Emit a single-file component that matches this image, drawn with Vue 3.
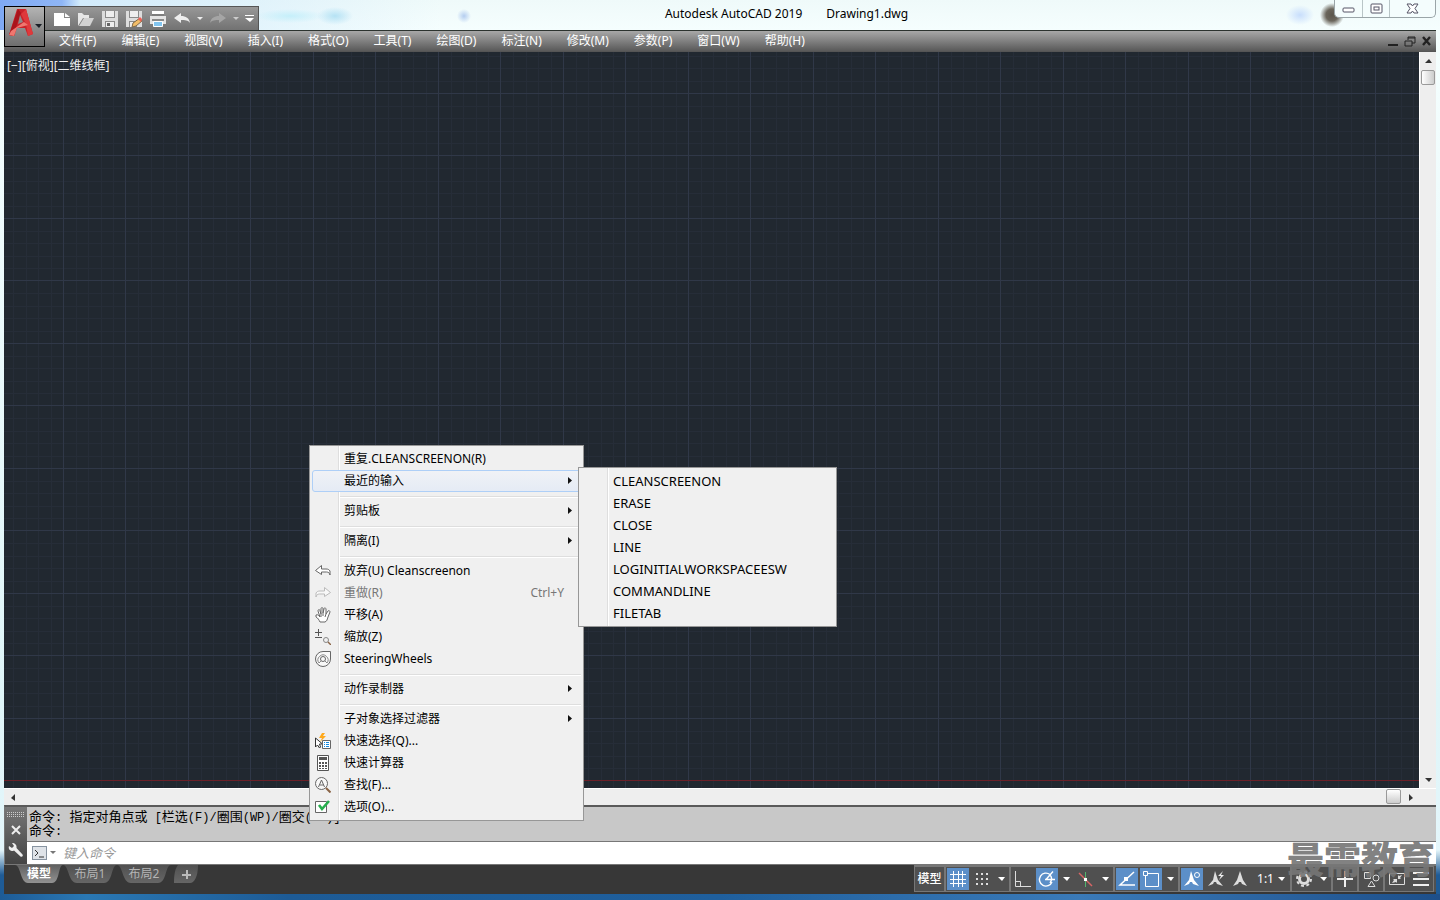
<script setup>
const menus = ['文件(F)', '编辑(E)', '视图(V)', '插入(I)', '格式(O)', '工具(T)', '绘图(D)', '标注(N)', '修改(M)', '参数(P)', '窗口(W)', '帮助(H)']

const context = [
  { label: '重复.CLEANSCREENON(R)' },
  { label: '最近的输入', sub: true, active: true, end: true },
  { label: '剪贴板', sub: true, end: true },
  { label: '隔离(I)', sub: true, end: true },
  { label: '放弃(U) Cleanscreenon', icon: 'undo' },
  { label: '重做(R)', icon: 'redo', disabled: true, key: 'Ctrl+Y' },
  { label: '平移(A)', icon: 'pan' },
  { label: '缩放(Z)', icon: 'zoom' },
  { label: 'SteeringWheels', icon: 'wheel', end: true },
  { label: '动作录制器', sub: true, end: true },
  { label: '子对象选择过滤器', sub: true },
  { label: '快速选择(Q)...', icon: 'quick' },
  { label: '快速计算器', icon: 'calc' },
  { label: '查找(F)...', icon: 'find' },
  { label: '选项(O)...', icon: 'options' }
]
const recent = ['CLEANSCREENON', 'ERASE', 'CLOSE', 'LINE', 'LOGINITIALWORKSPACEESW', 'COMMANDLINE', 'FILETAB']

const history = ['命令: 指定对角点或 [栏选(F)/圈围(WP)/圈交(CP)]', '命令:']
const runs = (line) => line.split(/([\u4e00-\u9fff]+)/).filter(Boolean).map((text) => ({ text, han: /[\u4e00-\u9fff]/.test(text) }))
const minor = [0, 13, 25, 38, 50, 75, 88, 100, 113]
</script>

<template>
  <div class="window">
    <header class="titlebar">
      <div class="quick">
        <button class="q" aria-label="新建"><svg width="18" height="18"><path d="M1 3h10v5h6v8H1z" fill="#fff" /><path d="M12 3l5 4h-5z" fill="#fff" /></svg></button>
        <button class="q" aria-label="打开"><svg width="18" height="18"><path d="M1 16V3h4l2 2h5v3H6z" fill="#e6e6e6" /><path d="M7 8h10l-4 8H2z" fill="#d2d2d2" /></svg></button>
        <button class="q" aria-label="保存"><svg width="18" height="18"><path d="M1 1h16v16H1z" fill="#ddd" /><path d="M4 1h10v7H4zM4 11h10v6H4z" fill="#8a8a8a" /><path d="M5 1h8v6H5zM5 12h8v5H5z" fill="#eee" /><path d="M6 13h3v3H6z" fill="#666" /></svg></button>
        <button class="q" aria-label="另存为"><svg width="18" height="18"><path d="M1 1h16v16H1z" fill="#ddd" /><path d="M4 1h10v7H4zM4 11h8v6H4z" fill="#8a8a8a" /><path d="M5 1h8v6H5zM5 12h4v5H5z" fill="#eee" /><path d="M7 17l1-4 7-5 2 3-6 5z" fill="#f2bd68" stroke="#806a48" /><path d="M13 9l2-2 2 2-1 3z" fill="#ee6058" /></svg></button>
        <button class="q" aria-label="打印"><svg width="18" height="18"><path d="M1 6h16v8H1z" fill="#e4e4e4" /><path d="M3 1h12v3H3z" fill="#fff" /><path d="M3 4h12v2H3z" fill="#7d7d7d" /><path d="M3 9h12v2H3z" fill="#8a8a8a" /><path d="M4.500 11.500h9v5h-9z" fill="#82c5f0" stroke="#fff" /></svg></button>
        <button class="q" aria-label="放弃"><svg width="18" height="18"><path d="M1 8l7-5v3c5 0 8 2 9 7-2-3-5-3-9-3v3z" fill="#eee" /></svg></button>
        <button class="q tiny" aria-label="放弃列表"><svg width="6" height="4"><path d="M0 0h6L3 3z" fill="#eee" /></svg></button>
        <button class="q" aria-label="重做"><svg width="18" height="18"><path d="M17 8l-7-5v3c-5 0-8 2-9 7 2-3 5-3 9-3v3z" fill="#a5a5a5" /></svg></button>
        <button class="q tiny" aria-label="重做列表"><svg width="6" height="4"><path d="M0 0h6L3 3z" fill="#ccc" /></svg></button>
        <button class="q more" aria-label="自定义"><svg width="9" height="8"><path d="M0 0h9v1H0zM0 3h9L5 7z" fill="#fff" /></svg></button>
      </div>
      <div class="title"><span>Autodesk AutoCAD 2019</span><span>Drawing1.dwg</span></div>
      <div class="winbtns">
        <button aria-label="最小化"><svg width="13" height="11"><rect x="1" y="5" width="11" height="4" rx="1" fill="#fff" stroke="#555566" /></svg></button>
        <button aria-label="还原"><svg width="13" height="11"><rect x="1" y="1" width="11" height="9" rx="1" fill="#fff" stroke="#555566" /><rect x="4" y="4" width="5" height="3" fill="#fff" stroke="#555566" /></svg></button>
        <button aria-label="关闭"><svg width="13" height="11"><path d="M1 1h4l1.500 2L8 1h4L9 5.500l3 4.500H8L6.500 8 5 10H1l3-4.500z" fill="#fff" stroke="#555566" /></svg></button>
      </div>
    </header>

    <button class="appbtn" aria-label="应用程序菜单">
      <svg width="39" height="39" viewBox="0 0 39 39">
        <path d="M4 28L12 2h9l7 25-5 2-3-8h-8l-3 8z" fill="#c92229" />
        <path d="M4 28L13 2l3 4-4 11-3 12z" fill="#a9141b" />
        <path d="M13 2h8l-5 5 5 10 2 12 5-2L21 2z" fill="#df393b" />
        <path d="M6 24l13-9 4 3-11 3-3 8-5-1z" fill="#ef776f" />
        <path d="M15 8l3 7-5 2z" fill="#8a8a8a" />
        <path d="M30 17h7l-3 4z" fill="#1b1f27" />
      </svg>
    </button>

    <nav class="menubar">
      <button v-for="m in menus" :key="m">{{ m }}</button>
      <div class="docbtns">
        <button aria-label="最小化文档"><svg width="10" height="11"><path d="M0 8h10v2H0z" fill="#222" /></svg></button>
        <button aria-label="还原文档"><svg width="12" height="11"><path d="M4 4V1h7v6H8M1 5h7v5H1zM4 2h7" fill="none" stroke="#222" /></svg></button>
        <button aria-label="关闭文档"><svg width="10" height="11"><path d="M1 1l7 8M8 1L1 9" stroke="#222" stroke-width="2.4" /></svg></button>
      </div>
    </nav>

    <main class="drawing">
      <div class="canvas">
        <svg class="grid" width="100%" height="100%" aria-hidden="true">
          <defs>
            <pattern id="grid" x="59" y="41" width="125" height="125" patternUnits="userSpaceOnUse">
              <rect width="125" height="125" fill="#212830" />
              <template v-for="n in minor" :key="n">
                <rect :x="n" y="0" width="1" height="125" fill="#262d38" />
                <rect x="0" :y="n" width="125" height="1" fill="#262d38" />
              </template>
              <path d="M0 0h1v125H0zM62 0h1v125h-1zM0 0h125v1H0zM0 62h125v1H0z" fill="#303848" />
            </pattern>
          </defs>
          <rect width="100%" height="100%" fill="url(#grid)" />
        </svg>
        <div class="axis"></div>
        <div class="viewlabel">[−][俯视][二维线框]</div>
      </div>
      <div class="vscroll">
        <button aria-label="向上滚动"><svg width="7" height="4"><path d="M0 4h7L4 0z" fill="#333" /></svg></button>
        <div class="thumb"></div>
        <button class="last" aria-label="向下滚动"><svg width="7" height="4"><path d="M0 0h7L4 4z" fill="#333" /></svg></button>
      </div>
    </main>
    <div class="hscroll">
      <button aria-label="向左滚动"><svg width="4" height="7"><path d="M4 0v7L0 4z" fill="#333" /></svg></button>
      <div class="thumb"></div>
      <button aria-label="向右滚动"><svg width="4" height="7"><path d="M0 0v7l4-3z" fill="#333" /></svg></button>
    </div>

    <section class="command">
      <div class="side">
        <svg width="18" height="6"><template v-for="r in 3" :key="r"><rect v-for="c in 9" :key="c" :x="c * 2 - 2" :y="r * 2 - 2" width="1" height="1" fill="#ccc" /></template></svg>
        <button aria-label="关闭命令窗口"><svg width="10" height="10"><path d="M1 1l8 8M9 1L1 9" stroke="#eee" stroke-width="2" /></svg></button>
        <button aria-label="自定义命令窗口"><svg width="16" height="16"><path d="M4 1l2 3-2 2-3-2c-1 3 1 5 4 5l1-.5 6.500 6c1.500 1 3-.5 2-2L8.500 6C9 3 7 1 4 1z" fill="#eee" /></svg></button>
      </div>
      <div class="cmdbody">
        <div class="history">
          <p v-for="(line, i) in history" :key="i"><span v-for="(r, j) in runs(line)" :key="j" :class="{ han: r.han }">{{ r.text }}</span></p>
        </div>
        <label class="entry">
          <svg width="15" height="14"><rect x="0.5" y="0.5" width="14" height="13" fill="#dfe3e8" stroke="#8793a0" /><path d="M3 4l3 3-3 3M7 11h5" fill="none" stroke="#333" /></svg>
          <svg width="6" height="4"><path d="M0 0h6L3 3z" fill="#777" /></svg>
          <input type="text" placeholder="键入命令" aria-label="命令" />
        </label>
      </div>
    </section>

    <footer class="status">
      <div class="tabs">
        <button class="tab on">模型</button>
        <button class="tab">布局1</button>
        <button class="tab">布局2</button>
        <button class="tab add" aria-label="新建布局"><svg width="9" height="9"><path d="M4 0h2v9H4zM0 4h9v2H0z" fill="#bbb" /></svg></button>
      </div>
      <div class="tools">
        <div class="group"><button class="text model">模型</button></div>
        <div class="group">
          <button class="t on" aria-label="栅格"><svg width="22" height="22"><path d="M6.500 3v16M11.500 3v16M15.500 3v16M3 6.500h16M3 11.500h16M3 15.500h16" stroke="#fff" /></svg></button>
          <button class="t" aria-label="捕捉"><svg width="22" height="22"><path d="M5 5h2v2H5zM10 5h2v2h-2zM15 5h2v2h-2zM5 10h2v2H5zM10 10h2v2h-2zM15 10h2v2h-2zM5 15h2v2H5zM10 15h2v2h-2zM15 15h2v2h-2z" fill="#ddd" /></svg></button>
          <button class="d" aria-label="捕捉设置"><svg width="7" height="4"><path d="M0 0h7L4 4z" fill="#fff" /></svg></button>
        </div>
        <div class="group">
          <button class="t" aria-label="正交"><svg width="22" height="22"><path d="M3.500 3v15.500H19M3.500 13.500h5v5" fill="none" stroke="#ddd" /></svg></button>
          <button class="t on" aria-label="极轴"><svg width="22" height="22"><path d="M14 6.500A6.500 6.500 0 1 0 16 14" fill="none" stroke="#fff" stroke-width="1.400" /><path d="M10 11.500l7-8M9 11.500h10M14 7c2 2 2 5 0 8" fill="none" stroke="#fff" stroke-width="1.400" /></svg></button>
          <button class="d" aria-label="极轴设置"><svg width="7" height="4"><path d="M0 0h7L4 4z" fill="#fff" /></svg></button>
          <button class="t" aria-label="等轴测"><svg width="22" height="22"><path d="M4 5l13 13" stroke="#d96565" stroke-width="1.400" /><path d="M10.500 4v15" stroke="#53b46d" /><path d="M9 10h3v3H9z" fill="#fff" /></svg></button>
          <button class="d" aria-label="等轴测设置"><svg width="7" height="4"><path d="M0 0h7L4 4z" fill="#fff" /></svg></button>
        </div>
        <div class="group">
          <button class="t on" aria-label="对象捕捉追踪"><svg width="22" height="22"><path d="M18 4L4 17h15" fill="none" stroke="#fff" stroke-width="1.500" /><path d="M8 9h4v4H8z" fill="#fff" /></svg></button>
          <button class="t on" aria-label="对象捕捉"><svg width="22" height="22"><path d="M8 5.500h10.500v13h-13V8" fill="none" stroke="#fff" /><path d="M3.500 3.500h4v4h-4z" fill="none" stroke="#fff" /></svg></button>
          <button class="d" aria-label="对象捕捉设置"><svg width="7" height="4"><path d="M0 0h7L4 4z" fill="#fff" /></svg></button>
        </div>
        <div class="group">
          <button class="t on" aria-label="注释可见性"><svg width="22" height="22"><path d="M10 3l3 9 5 6-6-2-1-2h-2l-1 2-5 2 5-6z" fill="#fff" /><circle cx="16" cy="7" r="2.500" fill="none" stroke="#fff" /></svg></button>
          <button class="t" aria-label="自动缩放"><svg width="22" height="22"><path d="M10 3l3 9 5 6-6-2-1-2h-2l-1 2-5 2 5-6z" fill="#ddd" /><path d="M18 3l-5 5h3l-2 4 5-5h-3z" fill="#eee" /></svg></button>
          <button class="t" aria-label="注释"><svg width="22" height="22"><path d="M11 3l3 9 4 6-5-2-1-2h-2l-1 2-5 2 4-6z" fill="#ddd" /></svg></button>
          <button class="text scale">1:1 <svg width="7" height="4"><path d="M0 0h7L4 4z" fill="#fff" /></svg></button>
        </div>
        <div class="group">
          <button class="t" aria-label="工作空间"><svg width="22" height="22"><circle cx="11" cy="11" r="4.500" fill="none" stroke="#ddd" stroke-width="3" /><circle cx="11" cy="11" r="7" fill="none" stroke="#ddd" stroke-width="2" stroke-dasharray="3 2.500" /></svg></button>
          <button class="d" aria-label="工作空间设置"><svg width="7" height="4"><path d="M0 0h7L4 4z" fill="#fff" /></svg></button>
        </div>
        <div class="group"><button class="t" aria-label="注释监视器"><svg width="22" height="22"><path d="M11 3v16M3 11h16" stroke="#eee" stroke-width="2" /></svg></button></div>
        <div class="group"><button class="t" aria-label="隔离对象"><svg width="22" height="22"><path d="M4.500 4.500h6v6h-6zM8 18.500h7L11.500 13z" fill="none" stroke="#ddd" /><circle cx="16" cy="10" r="3" fill="none" stroke="#ddd" /></svg></button></div>
        <div class="group">
          <button class="t" aria-label="全屏显示"><svg width="22" height="22"><path d="M3.500 5.500h15v11h-15z" fill="none" stroke="#ddd" /><path d="M12 11V7l1 1 3-1-2 3 1 1zM6 15l2-3-1-1h4v4l-1-1z" fill="#ddd" /></svg></button>
          <button class="t" aria-label="自定义状态栏"><svg width="22" height="22"><path d="M3 5h16M3 11h16M3 17h16" stroke="#eee" stroke-width="2" /></svg></button>
        </div>
      </div>
    </footer>

    <div class="watermark">最需教育</div>

    <ul class="popup main">
      <li v-for="c in context" :key="c.label" :class="{ end: c.end }">
        <button :class="{ active: c.active }" :disabled="c.disabled">
          <span class="ico">
            <svg v-if="c.icon === 'undo'" width="16" height="16"><path d="M6.500 2.500L.5 7.500l6 4V9h5c2 0 3 1 3.500 3V8c-1-1.500-2-2-4-2H6.500z" fill="#fff" stroke="#666" /></svg>
            <svg v-else-if="c.icon === 'redo'" width="16" height="16"><path d="M9.500 2.500l6 5-6 4V9h-5c-2 0-3 1-3.500 3V8c1-1.500 2-2 4-2h4.500z" fill="#f8f8f8" stroke="#bbb" /></svg>
            <svg v-else-if="c.icon === 'pan'" width="16" height="16"><path d="M5 15c-1-2-2-4-4-5V8c2-1 3 1 4 2L3 4c0-2 2-2 2 0l1 3V2c0-2 2-2 2 0v4l1-4c0-2 2-1 2 0v5l2-3c1-1 2 0 2 1l-2 5c-1 3-1 4-3 5zM6 7v3M8 6v3M11 7l-1 3" fill="#fff" stroke="#666" /></svg>
            <svg v-else-if="c.icon === 'zoom'" width="16" height="16"><path d="M3.500 0v7M0 3.500h7M0 8.500h7" stroke="#555" /><circle cx="11" cy="11" r="2.500" fill="none" stroke="#888" /><path d="M13 13l3 3" stroke="#8a6446" stroke-width="1.400" /></svg>
            <svg v-else-if="c.icon === 'wheel'" width="16" height="16"><path d="M8 .5h7.500V8A7.500 7.500 0 1 1 8 .5z" fill="#f8f8f8" stroke="#666" /><path d="M4 12a5 5 0 1 1 8 0M4 12l2-2M12 12l-2-2" fill="none" stroke="#888" /><circle cx="8" cy="8" r="2.500" fill="none" stroke="#666" /></svg>
            <svg v-else-if="c.icon === 'quick'" width="16" height="16"><path d="M7 0L4 5h3L5 9l6-6H8l2-3z" fill="#ffa91b" /><path d="M.5 5v9l2-2 2 3 1-1-1-3h3z" fill="#fff" stroke="#333" /><path d="M7.500 7.500h8v8h-8z" fill="#fff" stroke="#666" /><path d="M9 9.500h1M11 9.500h3M9 11.500h1M11 11.500h3M9 13.500h1M11 13.500h3" stroke="#1389df" /></svg>
            <svg v-else-if="c.icon === 'calc'" width="16" height="16"><path d="M2.500.5h11v15h-11z" fill="#fff" stroke="#555" /><path d="M4 2h8v3H4zM4 7h2v2H4zM7 7h2v2H7zM10 7h2v2h-2zM4 10h2v2H4zM7 10h2v2H7zM10 10h2v2h-2zM4 13h2v1H4zM7 13h2v1H7zM10 13h2v1h-2z" fill="#555" /></svg>
            <svg v-else-if="c.icon === 'find'" width="16" height="16"><circle cx="6.500" cy="6.500" r="6" fill="#f8f8f8" stroke="#666" /><path d="M3.500 10l3-7 3 7M5 8h3.500" fill="none" stroke="#666" /><path d="M11 11l4.500 4.500" stroke="#8a6446" stroke-width="2" /></svg>
            <svg v-else-if="c.icon === 'options'" width="16" height="16"><path d="M.5 2.500h11v11H.5z" fill="#fff" stroke="#666" /><path d="M4 6l3 4 7-8" fill="none" stroke="#25ae4c" stroke-width="2.600" /></svg>
          </span>
          <span class="lbl">{{ c.label }}</span>
          <span v-if="c.key" class="key">{{ c.key }}</span>
          <svg v-if="c.sub" class="arrow" width="5" height="8"><path d="M0 0v7l4-3.500z" fill="#111" /></svg>
        </button>
      </li>
    </ul>
    <ul class="popup child">
      <li v-for="r in recent" :key="r"><button><span class="ico"></span><span class="lbl">{{ r }}</span></button></li>
    </ul>
  </div>
</template>

<style>
body { margin: 0; }
</style>

<style scoped>
* { box-sizing: border-box; }
button { border: 0; margin: 0; padding: 0; background: none; color: inherit; font: inherit; display: flex; align-items: center; justify-content: center; flex: none; }
svg { display: block; flex: none; }
.window {
  position: relative; display: flex; flex-direction: column; min-height: 100vh; padding: 0 4px 6px; overflow: hidden;
  font: 12px/16px "Noto Sans", "Noto Sans CJK SC", sans-serif; color: #000;
  background:
    radial-gradient(circle at 464px 16px, #b4cdf0 0, #b4cdf000 7px),
    radial-gradient(ellipse 18px 9px at 335px 16px, #b5e2f4, #b5e2f400),
    radial-gradient(ellipse 34px 7px at 290px 16px, #c5effa, #c5effa00),
    radial-gradient(ellipse 14px 10px at calc(100% - 140px) 15px, #c8defc, #c8defc00),
    radial-gradient(circle at calc(100% - 108px) 15px, #5b564c 0, #6b665c 6px, #d0d8d800 12px),
    linear-gradient(90deg, #7fa9f4 0, #8fb6f6 62px, #d2ebfb 80px, #d9f3fc00 440px) 0 0 / 100% 30px no-repeat,
    linear-gradient(90deg, #1d5b96, #2a78b4 6%, #1d5b96 20%, #1f5f9d 50%, #3a7ab8 75%, #1d4f8a) 0 100% / 100% 6px no-repeat,
    linear-gradient(#effafa 0, #f5fefe 30px, #dff5f8 700px, #e4f6fb 850px, #1f5b96 875px, #1d5b96);
}
.titlebar { display: flex; height: 30px; align-items: flex-start; }
.quick { display: flex; align-items: center; width: 255px; height: 24px; margin-top: 6px; padding-left: 45px; border: 1px solid #555; border-bottom: 0; background: linear-gradient(#989898, #727272); }
.q { width: 24px; height: 22px; }
.q.tiny { width: 12px; }
.q.more { width: 15px; }
.title { flex: 1; display: flex; justify-content: center; gap: 24px; padding: 6px 20px 0 0; }
.winbtns { display: flex; width: 102px; height: 18px; border: 1px solid #9aa5a8; border-top: 0; border-radius: 0 0 5px 5px; background: #f4fdfd; }
.winbtns button { width: 27px; }
.winbtns button + button { border-left: 1px solid #b9c5c7; }
.winbtns button:last-child { flex: 1; }
.appbtn { position: absolute; left: 4px; top: 6px; width: 41px; height: 41px; border: 1px solid #000; background: linear-gradient(#b4b4b4, #6e6e6e); z-index: 1; }
.menubar { display: flex; align-items: center; gap: 25px; height: 22px; padding: 0 4px 0 55px; border-top: 1px solid #2c332f; border-bottom: 1px solid #555; background: linear-gradient(#a8a8a8, #595959); color: #fff; }
.docbtns { display: flex; gap: 6px; margin-left: auto; }
.drawing { flex: 1; display: flex; min-height: 0; }
.canvas { position: relative; flex: 1; background: #212830; }
.grid { position: absolute; inset: 0; }
.axis { position: absolute; left: 0; right: 0; bottom: 7px; height: 1px; background: #6b2028; }
.viewlabel { position: relative; padding: 6px 3px; color: #eee; }
.vscroll { display: flex; flex-direction: column; width: 17px; background: #eee; border-left: 1px solid #fff; }
.vscroll button { height: 17px; }
.vscroll .last { margin-top: auto; }
.thumb { border: 1px solid #999; border-radius: 2px; background: linear-gradient(90deg, #fff, #ccc); }
.vscroll .thumb { height: 15px; margin: 1px; }
.hscroll { display: flex; height: 17px; padding-right: 17px; background: #eee; border-top: 1px solid #fff; }
.hscroll button { width: 17px; }
.hscroll .thumb { width: 15px; margin: 0 1px 1px auto; background: linear-gradient(#fff, #ccc); }
.command { display: flex; border-top: 2px solid #5a5a5a; background: #666; border-left: 1px solid #777; border-bottom: 1px solid #777; }
.side { display: flex; flex-direction: column; align-items: center; gap: 7px; width: 22px; padding-top: 5px; background: linear-gradient(#777, #444); }
.cmdbody { flex: 1; }
.history { height: 34px; padding: 4px 2px 0; background: #c8c8c8; font: 12px/14px "Liberation Mono", "Noto Sans CJK SC", monospace; }
.history p { margin: 0; height: 14px; white-space: pre; }
.han { font-size: 13px; }
.entry { display: flex; align-items: center; gap: 3px; height: 23px; padding-left: 5px; border-top: 1px solid #777; background: #fff; }
.entry input { flex: 1; min-width: 0; margin-left: 4px; border: 0; padding: 0; outline: 0; background: none; font: italic 13px/18px "Noto Sans CJK SC", sans-serif; }
.entry input::placeholder { color: #999; opacity: 1; }
.status { display: flex; justify-content: space-between; height: 29px; background: #373737; }
.tabs { display: flex; padding-left: 11px; height: 18px; }
.tab { width: 54px; height: 18px; color: #b5b5b5; background: linear-gradient(#505050, #666); clip-path: path("M0 0C6 0 5 18 14 18H41C50 18 48 0 54 0Z"); }
.tab.on { width: 48px; color: #fff; font-weight: 700; background: linear-gradient(#606060, #929292); clip-path: path("M0 0C6 0 5 18 13 18H37C45 18 43 0 48 0Z"); }
.tab.add { width: 24px; margin-left: 3px; clip-path: path("M4 0H24C24 12 20 18 16 18H0C0 9 1 4 4 0Z"); }
.tools { display: flex; height: 27px; padding-right: 2px; background: #505050; border-top: 1px solid #777; }
.group { display: flex; align-items: center; padding: 0 1px; border: 1px solid #777; gap: 2px; }
.t { width: 22px; height: 22px; }
.t.on { background: #5c8fc8; }
.d { width: 13px; height: 22px; }
.text { color: #fff; height: 22px; }
.model { width: 27px; font-weight: 500; }
.scale { width: 36px; gap: 4px; }
.watermark { position: absolute; right: 5px; bottom: 22px; font: 900 37px/40px "Noto Sans CJK SC", sans-serif; color: rgba(118, 118, 118, 0.93); white-space: nowrap; }
.popup { position: absolute; margin: 0; padding: 2px; border: 1px solid #979797; list-style: none; background: linear-gradient(90deg, #f0f0f0 28px, #dedede 28px, #dedede 29px, #fff 29px, #fff 30px, #f0f0f0 30px); }
.popup.main { left: 309px; top: 445px; width: 275px; }
.popup.child { left: 578px; top: 467px; width: 259px; font-size: 13px; }
.popup button { position: relative; width: 100%; height: 22px; justify-content: flex-start; border: 1px solid transparent; border-radius: 3px; }
.popup button:disabled { color: #777; }
.popup button.active { border-color: #aecff7; background: linear-gradient(#f0f2f6, #e5ebf5); }
.ico { width: 22px; margin-right: 9px; padding-left: 2px; }
.key { margin-left: auto; padding-right: 16px; }
.arrow { margin-left: auto; margin-right: 7px; }
.end::after { content: ""; display: block; height: 8px; margin-left: 28px; background: linear-gradient(transparent 4px, #dedede 4px, #dedede 5px, #fff 5px, #fff 6px, transparent 6px); }
</style>
